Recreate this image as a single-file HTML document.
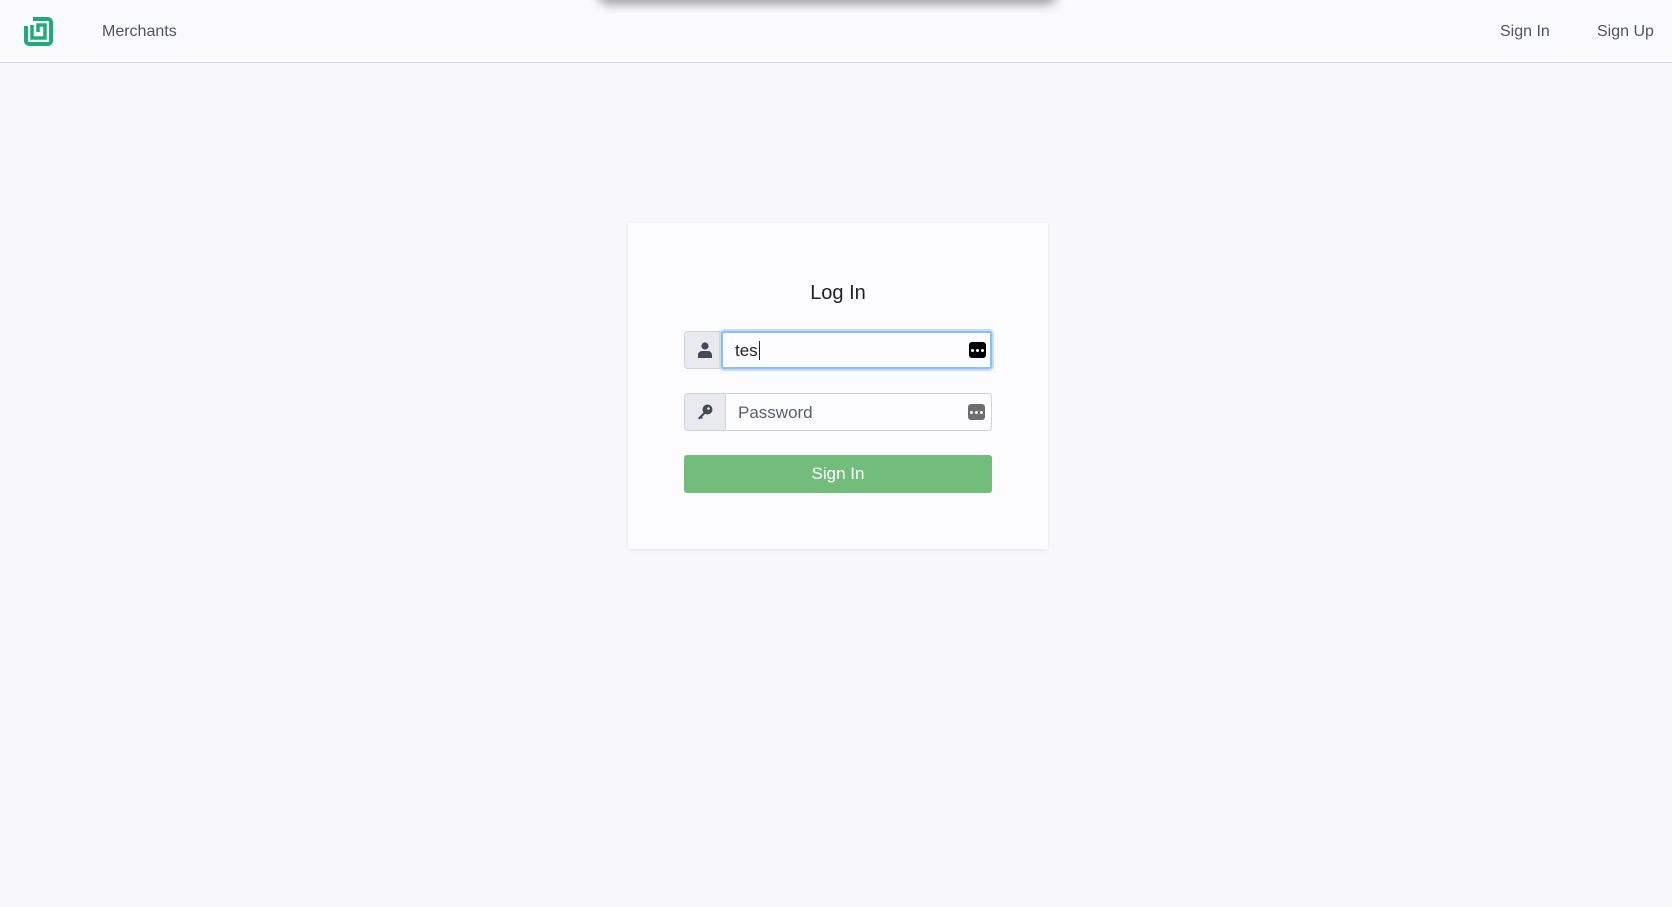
<!DOCTYPE html>
<html><head><style>
body{margin:0;width:1672px;height:907px;background:#f8f8fb;font-family:"Liberation Sans",sans-serif;position:relative;overflow:hidden}
.hdr{position:absolute;left:0;top:0;width:1672px;height:62px;background:#fbfbfd;border-bottom:1px solid #d5d8de}
.nav{position:absolute;top:23px;font-size:16px;color:#50545e}
.shadow{position:absolute;left:600px;top:-20px;width:455px;height:20px;box-shadow:0 2px 10px 3px rgba(0,0,0,.35);border-radius:10px}
.card{position:absolute;left:628px;top:223px;width:420px;height:326px;background:#fcfcfe;box-shadow:0 1px 4px rgba(0,0,0,.08)}
.title{position:absolute;left:0;width:420px;top:59px;text-align:center;font-size:20px;color:#222}
.grp{position:absolute;left:56px;width:308px;height:38px}
.add{position:absolute;left:0;top:0;width:40px;height:36px;background:#e9eaee;border:1px solid #cfd2d8;border-radius:4px 0 0 4px}
.inp{position:absolute;top:0;right:0;height:36px;background:#fdfdff;border:1px solid #cfd2d8;border-radius:0 4px 4px 0;font-size:17px}
.btn{position:absolute;left:56px;top:232px;width:308px;height:38px;background:#72bd7c;border-radius:3px;color:#fff;font-size:17px;text-align:center;line-height:38px}
.pm{position:absolute;right:6px;top:11px;width:17px;height:16px;border-radius:3px}
.pm i{position:absolute;top:7px;width:3px;height:3px;border-radius:50%;background:#fff}
</style></head><body>
<div class="hdr">
<svg style="position:absolute;left:22px;top:15px" width="33" height="33" viewBox="0 0 33 33"><path d="M11 4H26a3 3 0 0 1 3 3V26a3 3 0 0 1-3 3H7a3 3 0 0 1-3-3V11" fill="none" stroke="#1faa7a" stroke-width="4"/><path d="M10 10V23H23V10H16V17" fill="none" stroke="#1faa7a" stroke-width="3.5"/></svg>
<div class="nav" style="left:102px">Merchants</div>
<div class="nav" style="left:1500px">Sign In</div>
<div class="nav" style="left:1597px">Sign Up</div>
</div>
<div class="shadow"></div>
<div class="card">
<div class="title">Log In</div>
<div class="grp" style="top:108px">
<div class="add"><svg style="position:absolute;left:13px;top:10px" width="14" height="16" viewBox="0 0 14 16"><circle cx="7" cy="4" r="3.6" fill="#444a55"/><path d="M0 16v-3a4 4 0 0 1 4-4h6a4 4 0 0 1 4 4v3z" fill="#444a55"/></svg></div>
<div class="inp" style="left:37px;border:2px solid #8ebdf3;height:34px;box-shadow:0 0 0 2px #c5dcf8;border-radius:3px"><span style="position:absolute;left:12px;top:8px;color:#222">tes<span style="border-left:1px solid #222;margin-left:1px"></span></span><div class="pm" style="background:#000;top:9px;right:4px"><i style="left:2px"></i><i style="left:7px"></i><i style="left:12px"></i></div></div>
</div>
<div class="grp" style="top:170px">
<div class="add"><svg style="position:absolute;left:12px;top:10px" width="16" height="16" viewBox="0 0 16 16"><circle cx="10.5" cy="5.5" r="5" fill="#444a55"/><path d="M7 8L1 14l1.5 1.5 1.5-1.5 1 1 1-1-1-1 4-4z" fill="#444a55"/><circle cx="11.5" cy="4.5" r="1.3" fill="#e9eaee"/></svg></div>
<div class="inp" style="left:41px"><span style="position:absolute;left:12px;top:9px;color:#5a5e66">Password</span><div class="pm" style="background:#6e6e72;top:10px"><i style="left:2px"></i><i style="left:7px"></i><i style="left:12px"></i></div></div>
</div>
<div class="btn">Sign In</div>
</div>
</body></html>
